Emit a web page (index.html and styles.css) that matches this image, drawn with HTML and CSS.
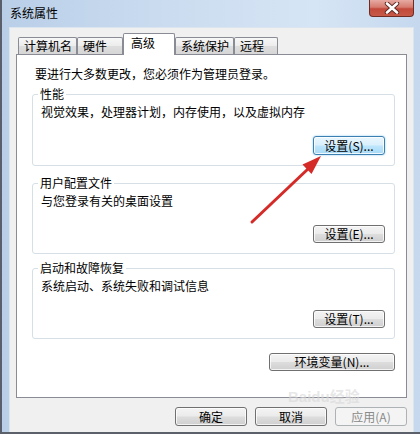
FILE: index.html
```html
<!DOCTYPE html>
<html lang="zh-CN">
<head>
<meta charset="utf-8">
<title>系统属性</title>
<link rel="stylesheet" href="styles.css">
</head>
<body>
<div class="window">
  <div class="titlebar">
    <span class="title">系统属性</span>
    <div class="close">
      <svg width="16" height="12" viewBox="0 0 16 12" aria-hidden="true">
        <path d="M3 1.5 L13 10.5 M13 1.5 L3 10.5" stroke="#5a2620" stroke-width="4.4" stroke-linecap="round" fill="none"/>
        <path d="M3 1.5 L13 10.5 M13 1.5 L3 10.5" stroke="#ffffff" stroke-width="2.6" stroke-linecap="round" fill="none"/>
      </svg>
    </div>
  </div>
  <div class="client">
    <div class="tabs">
      <div class="tab">计算机名</div>
      <div class="tab">硬件</div>
      <div class="tab active">高级</div>
      <div class="tab">系统保护</div>
      <div class="tab last">远程</div>
    </div>
    <div class="panel">
      <p class="intro">要进行大多数更改，您必须作为管理员登录。</p>
      <fieldset class="group g1">
        <legend>性能</legend>
        <p>视觉效果，处理器计划，内存使用，以及虚拟内存</p>
        <div class="row"><button class="btn default">设置(S)...</button></div>
      </fieldset>
      <fieldset class="group g2">
        <legend>用户配置文件</legend>
        <p>与您登录有关的桌面设置</p>
        <div class="row"><button class="btn">设置(E)...</button></div>
      </fieldset>
      <fieldset class="group g3">
        <legend>启动和故障恢复</legend>
        <p>系统启动、系统失败和调试信息</p>
        <div class="row"><button class="btn">设置(T)...</button></div>
      </fieldset>
      <div class="row env"><button class="btn wide">环境变量(N)...</button></div>
    </div>
    <div class="footer">
      <button class="btn">确定</button>
      <button class="btn">取消</button>
      <button class="btn" disabled>应用(A)</button>
    </div>
  </div>
  <div class="watermark">Baidu经验</div>
  <svg class="arrow" width="420" height="434" viewBox="0 0 420 434" aria-hidden="true">
    <line x1="252" y1="222" x2="309" y2="168" stroke="#d42a28" stroke-width="3" stroke-linecap="round"/>
    <polygon points="321,156 302.5,164.5 311.5,174" fill="#d42a28"/>
  </svg>
</div>
</body>
</html>
```
FILE: styles.css
```css
html, body {
  margin: 0;
  padding: 0;
}
body {
  width: 420px;
  height: 434px;
  overflow: hidden;
  font-family: "Noto Sans CJK SC", "Liberation Sans", sans-serif;
  font-size: 12px;
  color: #000;
}
.window {
  position: relative;
  box-sizing: border-box;
  height: 434px;
  display: flex;
  flex-direction: column;
  border-left: 2px solid #59606b;
  border-bottom: 2px solid #5b6069;
  padding: 0 6px 0 7px;
  background: linear-gradient(90deg, #b9cfe8 0, #cbdcf0 40%, #d6e5f5 75%, #c5d8ee 100%);
}
.titlebar {
  position: relative;
  height: 27px;
  display: flex;
  align-items: center;
  flex: none;
}
.title {
  padding-left: 1px;
  line-height: 14px;
  margin-top: -1px;
}
.close {
  position: absolute;
  right: 0;
  top: 0;
  width: 45px;
  height: 17px;
  box-sizing: border-box;
  border: 1px solid #6e2c24;
  border-top: none;
  border-radius: 0 0 4px 4px;
  background: linear-gradient(180deg, #e6aaa2 0, #d67b6f 45%, #c2493b 55%, #c65a48 100%);
  display: flex;
  align-items: center;
  justify-content: center;
}
.client {
  flex: 1;
  display: flex;
  flex-direction: column;
  background: #f0f0f0;
  border: 1px solid #dbe5f0;
  border-bottom: none;
  padding: 5px 6px 6px 6px;
}
.tabs {
  display: flex;
  align-items: flex-end;
  padding-left: 2px;
  height: 21px;
  flex: none;
}
.tab {
  box-sizing: border-box;
  height: 17px;
  min-width: 46px;
  padding: 0 4px 0 5px;
  line-height: 16px;
  border: 1px solid #898c95;
  border-bottom: none;
  border-radius: 2px 2px 0 0;
  background: linear-gradient(180deg, #f7f7f7 0, #ececec 50%, #dedede 51%, #d6d6d6 100%);
}
.tab.active {
  position: relative;
  z-index: 1;
  height: 22px;
  min-width: 52px;
  margin-bottom: -1px;
  padding-left: 7px;
  line-height: 18px;
  background: #fff;
}
.tab.last {
  min-width: 44px;
}
.panel {
  flex: 1;
  background: #fff;
  border: 1px solid #898c95;
  padding: 12px 11px 0 15px;
}
.intro {
  margin: 0 0 0 3px;
  line-height: 14px;
}
.group {
  margin: 6px 0 0 0;
  padding: 4px 9px 10px 8px;
  border: 1px solid #d5dfe5;
  border-radius: 3px;
  min-width: 0;
}
.group legend {
  padding: 0 2px;
  margin-left: -3px;
  line-height: 14px;
}
.group p {
  margin: 0;
  line-height: 14px;
}
.g2 {
  margin-top: 10px;
}
.g3 {
  margin-top: 7px;
}
.row {
  display: flex;
  justify-content: flex-end;
  margin-top: 17px;
}
.row.env {
  margin-top: 14px;
}
.btn {
  box-sizing: border-box;
  width: 72px;
  height: 18px;
  padding: 0;
  margin: 0;
  font-family: inherit;
  font-size: 12px;
  line-height: 16px;
  color: #000;
  border: 1px solid #707070;
  border-radius: 3px;
  background: linear-gradient(180deg, #f4f4f4 0, #ebebeb 48%, #dddddd 52%, #cfcfcf 100%);
  box-shadow: inset 0 0 0 1px rgba(255, 255, 255, 0.75);
}
.btn.default {
  height: 19px;
  border-color: #3c7fb1;
  background: linear-gradient(180deg, #eaf6fd 0, #d9f0fc 48%, #bee6fd 52%, #a7d9f5 100%);
  box-shadow: inset 0 0 0 1px rgba(255, 255, 255, 0.8), 0 0 2px #7ec2ea;
}
.btn.wide {
  width: 126px;
}
.btn:disabled {
  color: #8a8a8a;
  border-color: #adb2b5;
  background: #f4f4f4;
  box-shadow: none;
}
.footer {
  display: flex;
  justify-content: flex-end;
  gap: 8px;
  margin-top: 9px;
  flex: none;
}
.footer .btn {
  height: 19px;
}
.watermark {
  position: absolute;
  left: 286px;
  top: 389px;
  font-family: "Liberation Sans", "Noto Sans CJK SC", sans-serif;
  font-size: 15px;
  line-height: 15px;
  font-weight: bold;
  color: rgba(215, 215, 215, 0.6);
  pointer-events: none;
}
.arrow {
  position: absolute;
  left: -2px;
  top: 0;
  pointer-events: none;
}
```
